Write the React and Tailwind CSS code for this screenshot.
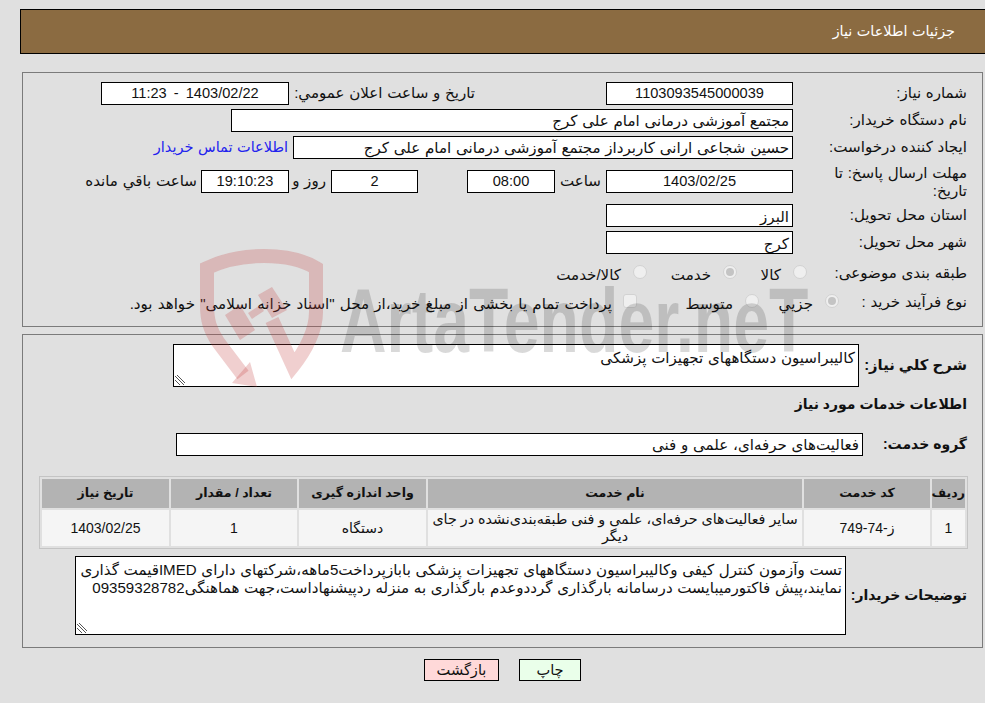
const Box = ({ className = "", children }) => (
  <div className={`h-[23px] shrink-0 border border-black bg-white px-[3px] whitespace-nowrap overflow-hidden ${className}`}>{children}</div>
);

const Label = ({ className = "w-[174px]", children }) => <div className={`shrink-0 ${className}`}>{children}</div>;

const Row = ({ className = "", children }) => <div className={`flex items-center ${className}`}>{children}</div>;

const Radio = ({ checked, className = "" }) => (
  <span className={`mb-[4px] flex h-[14px] w-[14px] shrink-0 items-center justify-center rounded-full border border-[#d2d2d2] bg-[#efefef] ${className}`}>
    {checked && <span className="h-[8px] w-[8px] rounded-full bg-[#c4c4c4]" />}
  </span>
);

const Grip = () => (
  <svg className="absolute bottom-0 left-0" width="12" height="12" viewBox="0 0 12 12" fill="none" stroke="#555" strokeWidth="1">
    <path d="M1 2 L10 11 M1 6 L6 11 M3 1 L11 9" />
  </svg>
);

const Th = ({ children }) => <th className="h-[29px] bg-[#b3b3b3] p-0 text-center text-[12.6px] font-bold [word-spacing:0]">{children}</th>;
const Td = ({ className = "text-[14px]", children }) => <td className={`h-[36px] bg-[#f5f5f5] p-0 text-center leading-[17px] [word-spacing:0] ${className}`}>{children}</td>;

export default function App() {
  return (
    <div dir="rtl" className="relative h-[703px] w-[985px] overflow-hidden bg-[#e0e0e0] pt-[9px] font-['Liberation_Sans','DejaVu_Sans',sans-serif] text-[15.1px] [word-spacing:0.5px] text-[#111111]">
      <div className="mr-[-2px] ml-[20px] flex h-[45px] items-center border-y border-l border-black bg-[#8b6b41] pr-[32px] text-[14.4px] text-white">
        جزئیات اطلاعات نیاز
      </div>

      <section className="mt-[18px] mr-[2px] ml-[22px] h-[255px] border border-[#7b7b7b] pt-[9px] pr-[15px]">
        <Row>
          <Label>شماره نیاز:</Label>
          <Box className="w-[187px] text-center text-[14.6px] leading-[21px]">1103093545000039</Box>
          <Label className="mr-[131px] w-[181px]">تاریخ و ساعت اعلان عمومي:</Label>
          <Box className="mr-[5px] w-[188px] text-center text-[14.6px] leading-[21px] [word-spacing:3px]">1403/02/22 - 11:23</Box>
        </Row>
        <Row className="mt-[4px]">
          <Label>نام دستگاه خریدار:</Label>
          <Box className="w-[562px] leading-[21px]">مجتمع آموزشی درمانی امام علی کرج</Box>
        </Row>
        <Row className="mt-[4px]">
          <Label>ایجاد کننده درخواست:</Label>
          <Box className="w-[500px] leading-[21px]">حسین شجاعی ارانی کاربرداز مجتمع آموزشی درمانی امام علی کرج</Box>
          <a className="mr-[5px] text-[14.5px] text-[#2222ee]">اطلاعات تماس خریدار</a>
        </Row>
        <Row className="mt-[4px] h-[37px]">
          <Label className="w-[174px] leading-[18px]">مهلت ارسال پاسخ: تا<br />تاریخ:</Label>
          <Box className="w-[187px] text-center text-[14.6px] leading-[21px]">1403/02/25</Box>
          <span className="mr-[5px] w-[46px]">ساعت</span>
          <Box className="w-[88px] text-center text-[14.6px] leading-[21px]">08:00</Box>
          <Box className="mr-[49px] w-[87px] text-center text-[14.6px] leading-[21px]">2</Box>
          <span className="mr-[5px] w-[37px]">روز و</span>
          <Box className="w-[88px] bg-[#ffffe8] text-center text-[14.6px] leading-[21px]">19:10:23</Box>
          <span className="mr-[4px]">ساعت باقي مانده</span>
        </Row>
        <Row className="mt-[4px]">
          <Label>استان محل تحویل:</Label>
          <Box className="w-[187px] leading-[24px]">البرز</Box>
        </Row>
        <Row className="mt-[4px]">
          <Label>شهر محل تحویل:</Label>
          <Box className="w-[187px] leading-[24px]">کرج</Box>
        </Row>
        <Row className="mt-[8px] h-[23px]">
          <Label className="w-[160px]">طبقه بندی موضوعی:</Label>
          <Radio />
          <span className="mr-[12px] w-[44px] pt-[4px]">کالا</span>
          <Radio checked />
          <span className="mr-[12px] w-[64px] pt-[4px]">خدمت</span>
          <Radio />
          <span className="mr-[12px] pt-[4px]">کالا/خدمت</span>
        </Row>
        <Row className="mt-[5px] h-[25px]">
          <Label className="w-[128px]">نوع فرآیند خرید :</Label>
          <Radio checked />
          <span className="mr-[12px] w-[54px] pt-[4px]">جزيي</span>
          <Radio />
          <span className="mr-[12px] w-[96px] pt-[4px]">متوسط</span>
          <span className="mb-[4px] h-[14px] w-[14px] shrink-0 rounded-[3px] border border-[#d2d2d2] bg-[#efefef]" />
          <span className="mr-[11px] pt-[4px] whitespace-nowrap [word-spacing:1px]">پرداخت تمام یا بخشی از مبلغ خرید،از محل "اسناد خزانه اسلامی" خواهد بود.</span>
        </Row>
      </section>

      <section className="mt-[7px] mr-[2px] ml-[22px] h-[314px] border border-[#7b7b7b] pt-[9px] pr-[15px]">
        <Row>
          <Label className="w-[108px] text-[14.8px] font-bold [word-spacing:0]">شرح کلي نياز:</Label>
          <div className="relative h-[43px] w-[686px] border border-black bg-white px-[3px] pt-[3px] leading-[20px]">
            کالیبراسیون دستگاههای تجهیزات پزشکی
            <Grip />
          </div>
        </Row>
        <div className="mt-[7px] h-[20px] text-[14px] font-bold leading-[20px] [word-spacing:0]">اطلاعات خدمات مورد نياز</div>
        <Row className="mt-[19px]">
          <Label className="w-[104px] text-[14px] font-bold [word-spacing:0]">گروه خدمت:</Label>
          <Box className="w-[687px] leading-[22px]">فعالیت‌های حرفه‌ای، علمی و فنی</Box>
        </Row>
        <table className="mt-[20px] mr-[-1px] w-[929px] table-fixed border-separate border-spacing-[2px] border border-[#c4c4c4]">
          <colgroup>
            <col className="w-[33px]" />
            <col className="w-[126px]" />
            <col className="w-[374px]" />
            <col className="w-[127px]" />
            <col className="w-[126px]" />
            <col className="w-[127px]" />
          </colgroup>
          <thead>
            <tr>
              <Th>ردیف</Th>
              <Th>کد خدمت</Th>
              <Th>نام خدمت</Th>
              <Th>واحد اندازه گیری</Th>
              <Th>تعداد / مقدار</Th>
              <Th>تاریخ نیاز</Th>
            </tr>
          </thead>
          <tbody>
            <tr>
              <Td>1</Td>
              <Td>ز-74-749</Td>
              <Td className="px-[1px] text-[14.3px]">سایر فعالیت‌های حرفه‌ای، علمی و فنی طبقه‌بندی‌نشده در جای دیگر</Td>
              <Td>دستگاه</Td>
              <Td>1</Td>
              <Td>1403/02/25</Td>
            </tr>
          </tbody>
        </table>
        <Row className="mt-[7px]">
          <Label className="w-[121px] text-[14px] font-bold [word-spacing:0]">توضیحات خریدار:</Label>
          <div className="relative h-[79px] w-[771px] border border-black bg-white px-[3px] pt-[4px] leading-[18px]">
            تست وآزمون کنترل کیفی وکالیبراسیون دستگاههای تجهیزات پزشکی بابازپرداخت5ماهه،شرکتهای دارای IMEDقیمت گذاری نمایند،پیش فاکتورمیبایست درسامانه بارگذاری گرددوعدم بارگذاری به منزله ردپیشنهاداست،جهت هماهنگی09359328782
            <Grip />
          </div>
        </Row>
      </section>

      <div className="mt-[11px] mr-[404px] flex gap-[20px]">
        <button className="h-[22px] w-[62px] border border-black bg-[#eaffea] text-[14.6px] leading-[20px]">چاپ</button>
        <button className="h-[22px] w-[75px] border border-black bg-[#ffd9d9] text-[14.6px] leading-[20px]">بازگشت</button>
      </div>

      <div dir="ltr" className="pointer-events-none absolute inset-0">
        <svg className="absolute left-[195px] top-[245px]" width="140" height="142" viewBox="195 245 140 142" fill="none" stroke="#c44040" strokeOpacity="0.25">
          <path strokeWidth="14" d="M243 375 L218 342 C210 330 207 320 207 305 L207 268 C240 252 290 252 316 268 L316 312 C316 330 306 350 293 366 L272 320" />
          <path fill="#c44040" fillOpacity="0.25" stroke="none" d="M225 315 L240 305 L255 330 L240 340 Z M258 295 L272 287 L287 310 L272 318 Z M250 362 L257 387 L232 383 Z" />
          <path strokeWidth="7" d="M250 316 L262 308" />
        </svg>
        <span className="absolute left-[340px] top-[276px] origin-left scale-x-[0.717] whitespace-nowrap font-['Liberation_Sans'] text-[90px] leading-none font-bold text-black/15 [word-spacing:0]">ArtaTender.neT</span>
      </div>
    </div>
  );
}
